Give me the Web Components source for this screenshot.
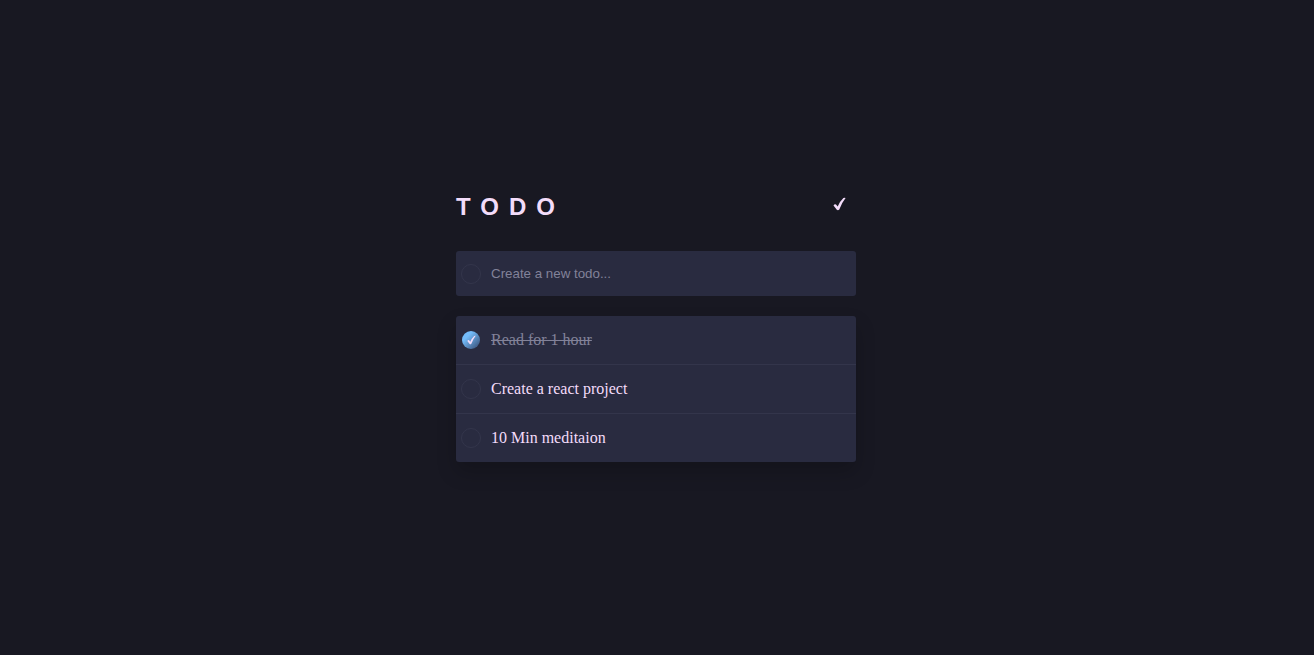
<!DOCTYPE html>
<html lang="en">
<head>
<meta charset="utf-8">
<title>Todo</title>
<style>
  body { margin: 0; background: #181822; }
</style>
</head>
<body>
<todo-app>
  <todo-item done>Read for 1 hour</todo-item>
  <todo-item>Create a react project</todo-item>
  <todo-item>10 Min meditaion</todo-item>
</todo-app>

<script>
const checkbox = `
  input[type="checkbox"] {
    appearance: none; flex: none; box-sizing: border-box;
    width: 20px; height: 20px; margin: 0;
    border: 1px solid #33354b; border-radius: 50%;
  }`;

class TodoCheck extends HTMLElement {
  constructor() {
    super();
    this.attachShadow({ mode: 'open' }).innerHTML = `
      <style>
        :host { display: block; width: 13px; height: 14px; }
        svg { display: block; width: 100%; height: 100%; }
      </style>
      <svg viewBox="0 0 13 14" fill="currentColor" aria-hidden="true">
        <path d="M0.5 8.4 Q1.6 6.6 3 7.4 L4.7 9.6 Q7 4.2 10.4 1.1 Q11.5 .6 12.6 1 Q9 5.4 6.3 12.4 Q5 13.8 3.8 12.7 Z"/>
      </svg>`;
  }
}

class TodoHeader extends HTMLElement {
  constructor() {
    super();
    this.attachShadow({ mode: 'open' }).innerHTML = `
      <style>
        :host { display: flex; justify-content: space-between; align-items: flex-start; height: 28px; color: #f3dcfa; }
        h1 { margin: 0; font: bold 24px/28px "Liberation Sans", Arial, sans-serif; letter-spacing: 10px; }
        button { display: flex; padding: 4px 10px; border: 0; background: none; color: inherit; cursor: pointer; }
      </style>
      <h1><slot></slot></h1>
      <button type="button" aria-label="Toggle all"><todo-check></todo-check></button>`;
  }
}

class TodoEntry extends HTMLElement {
  constructor() {
    super();
    this.attachShadow({ mode: 'open' }).innerHTML = `
      <style>
        ${checkbox}
        :host { display: flex; align-items: center; gap: 10px; height: 45px; padding: 0 5px; border-radius: 3px; background: #292b40; }
        input[type="text"] {
          flex: 1; min-width: 0; padding: 0; border: 0; outline: 0; background: none;
          color: #f3dcfa; font-family: "Liberation Sans", Arial, sans-serif;
        }
        ::placeholder { color: #828299; opacity: 1; }
      </style>
      <input type="checkbox" aria-label="New todo is done">
      <input type="text" placeholder="Create a new todo..." aria-label="New todo">`;
  }
}

class TodoItem extends HTMLElement {
  constructor() {
    super();
    this.attachShadow({ mode: 'open' }).innerHTML = `
      <style>
        ${checkbox}
        :host { display: block; border-bottom: 1px solid #33354b; color: #f3dcfa; }
        :host(:last-of-type) { border-bottom: 0; }
        label { display: flex; align-items: center; gap: 10px; height: 48px; padding: 0 5px; font: 16px/20px "Liberation Serif", "Times New Roman", serif; }
        .box { display: grid; place-items: center; }
        .box > * { grid-area: 1 / 1; }
        todo-check { display: none; position: relative; width: 9px; height: 10px; }
        input:checked { border-color: transparent; background: linear-gradient(135deg, #74bcfa 30%, #34466c) padding-box; }
        input:checked + todo-check { display: block; }
        :host([done]) .text { color: #828299; text-decoration: line-through; }
      </style>
      <label>
        <span class="box"><input type="checkbox"><todo-check></todo-check></span>
        <span class="text"><slot></slot></span>
      </label>`;
  }
  connectedCallback() {
    const box = this.shadowRoot.querySelector('input');
    box.checked = this.hasAttribute('done');
    box.onchange = () => this.toggleAttribute('done', box.checked);
  }
}

class TodoApp extends HTMLElement {
  constructor() {
    super();
    this.attachShadow({ mode: 'open' }).innerHTML = `
      <style>
        :host { display: grid; place-items: center; box-sizing: border-box; min-height: 100vh; padding-right: 2px; }
        main { width: 100%; max-width: 400px; }
        todo-entry { margin: 30px 0 20px; }
        section { border-radius: 3px; background: #292b40; box-shadow: 0 10px 20px rgba(0, 0, 0, .2); }
      </style>
      <main>
        <todo-header>TODO</todo-header>
        <todo-entry></todo-entry>
        <section aria-label="Todos"><slot></slot></section>
      </main>`;
  }
}

customElements.define('todo-check', TodoCheck);
customElements.define('todo-header', TodoHeader);
customElements.define('todo-entry', TodoEntry);
customElements.define('todo-item', TodoItem);
customElements.define('todo-app', TodoApp);
</script>
</body>
</html>
